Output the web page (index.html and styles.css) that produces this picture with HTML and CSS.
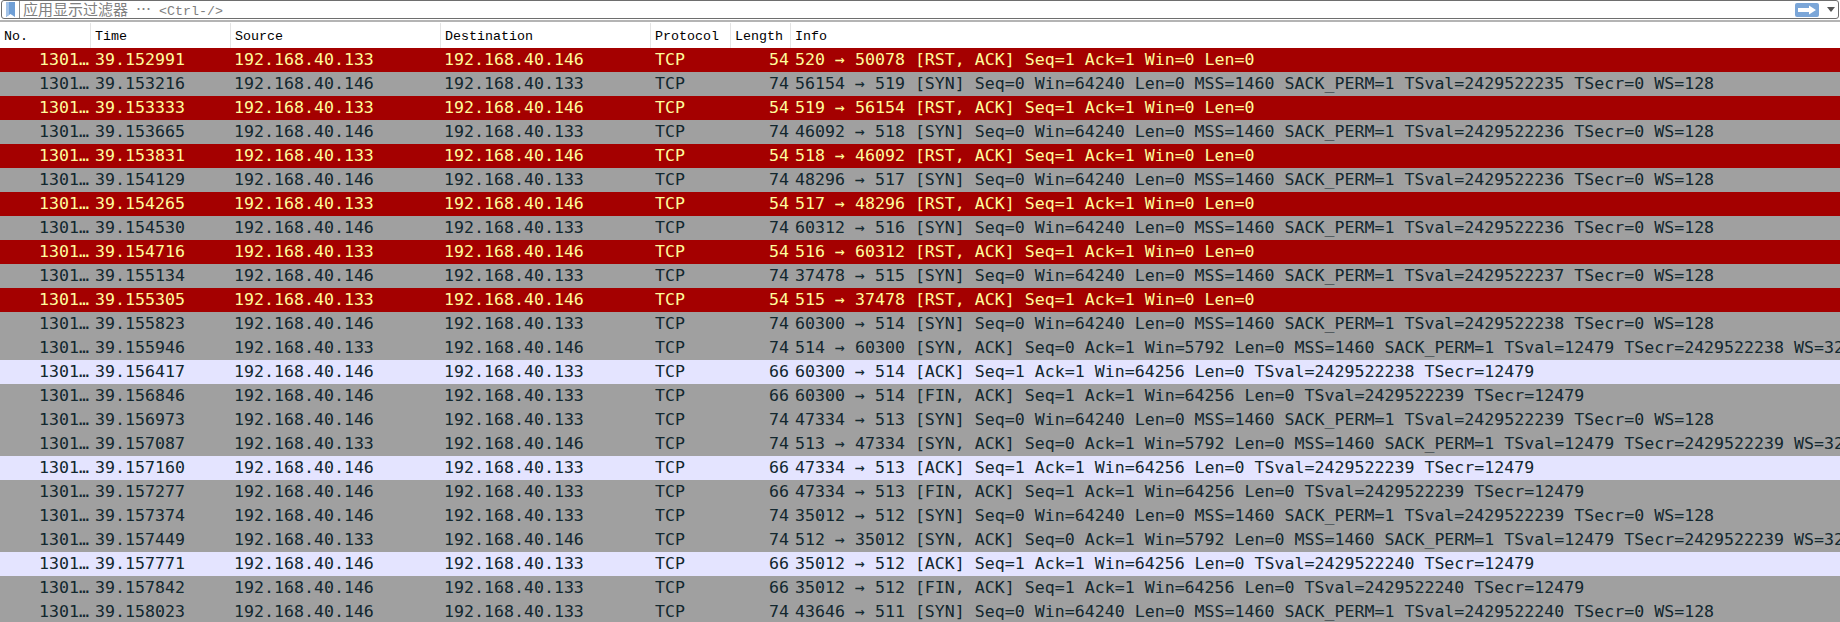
FILE: index.html
```html
<!DOCTYPE html>
<html lang="zh">
<head>
<meta charset="utf-8">
<title>Packets</title>
<link rel="stylesheet" href="styles.css">
</head>
<body>
<div class="filterbar">
  <div class="filterbox">
    <span class="bookmark"><svg width="9" height="15" viewBox="0 0 9 15"><path d="M0 0H9V15L4.500 12 0 15Z" fill="#6f9fd6"/><path d="M0 0H3V13L0 15Z" fill="#a3c2e6"/></svg></span>
    <span class="placeholder"><span class="cjk">应用显示过滤器</span> <span class="cjk">⋯</span> &lt;Ctrl-/&gt;</span>
    <span class="apply"><svg width="24" height="14" viewBox="0 0 24 14"><rect width="24" height="14" rx="2" fill="#7ba6d8"/><path d="M3 5H14V2.500L21 7 14 11.500V9H3Z" fill="#fff"/></svg></span>
    <span class="drop"></span>
  </div>
</div>
<div class="head">
  <div class="c no">No.</div><div class="c time">Time</div><div class="c src">Source</div><div class="c dst">Destination</div><div class="c proto">Protocol</div><div class="c len">Length</div><div class="c info">Info</div>
</div>
<div class="list">
<div class="row rst"><div class="c no">1301…</div><div class="c time">39.152991</div><div class="c src">192.168.40.133</div><div class="c dst">192.168.40.146</div><div class="c proto">TCP</div><div class="c len">54</div><div class="c info">520 → 50078 [RST, ACK] Seq=1 Ack=1 Win=0 Len=0</div></div>
<div class="row flag"><div class="c no">1301…</div><div class="c time">39.153216</div><div class="c src">192.168.40.146</div><div class="c dst">192.168.40.133</div><div class="c proto">TCP</div><div class="c len">74</div><div class="c info">56154 → 519 [SYN] Seq=0 Win=64240 Len=0 MSS=1460 SACK_PERM=1 TSval=2429522235 TSecr=0 WS=128</div></div>
<div class="row rst"><div class="c no">1301…</div><div class="c time">39.153333</div><div class="c src">192.168.40.133</div><div class="c dst">192.168.40.146</div><div class="c proto">TCP</div><div class="c len">54</div><div class="c info">519 → 56154 [RST, ACK] Seq=1 Ack=1 Win=0 Len=0</div></div>
<div class="row flag"><div class="c no">1301…</div><div class="c time">39.153665</div><div class="c src">192.168.40.146</div><div class="c dst">192.168.40.133</div><div class="c proto">TCP</div><div class="c len">74</div><div class="c info">46092 → 518 [SYN] Seq=0 Win=64240 Len=0 MSS=1460 SACK_PERM=1 TSval=2429522236 TSecr=0 WS=128</div></div>
<div class="row rst"><div class="c no">1301…</div><div class="c time">39.153831</div><div class="c src">192.168.40.133</div><div class="c dst">192.168.40.146</div><div class="c proto">TCP</div><div class="c len">54</div><div class="c info">518 → 46092 [RST, ACK] Seq=1 Ack=1 Win=0 Len=0</div></div>
<div class="row flag"><div class="c no">1301…</div><div class="c time">39.154129</div><div class="c src">192.168.40.146</div><div class="c dst">192.168.40.133</div><div class="c proto">TCP</div><div class="c len">74</div><div class="c info">48296 → 517 [SYN] Seq=0 Win=64240 Len=0 MSS=1460 SACK_PERM=1 TSval=2429522236 TSecr=0 WS=128</div></div>
<div class="row rst"><div class="c no">1301…</div><div class="c time">39.154265</div><div class="c src">192.168.40.133</div><div class="c dst">192.168.40.146</div><div class="c proto">TCP</div><div class="c len">54</div><div class="c info">517 → 48296 [RST, ACK] Seq=1 Ack=1 Win=0 Len=0</div></div>
<div class="row flag"><div class="c no">1301…</div><div class="c time">39.154530</div><div class="c src">192.168.40.146</div><div class="c dst">192.168.40.133</div><div class="c proto">TCP</div><div class="c len">74</div><div class="c info">60312 → 516 [SYN] Seq=0 Win=64240 Len=0 MSS=1460 SACK_PERM=1 TSval=2429522236 TSecr=0 WS=128</div></div>
<div class="row rst"><div class="c no">1301…</div><div class="c time">39.154716</div><div class="c src">192.168.40.133</div><div class="c dst">192.168.40.146</div><div class="c proto">TCP</div><div class="c len">54</div><div class="c info">516 → 60312 [RST, ACK] Seq=1 Ack=1 Win=0 Len=0</div></div>
<div class="row flag"><div class="c no">1301…</div><div class="c time">39.155134</div><div class="c src">192.168.40.146</div><div class="c dst">192.168.40.133</div><div class="c proto">TCP</div><div class="c len">74</div><div class="c info">37478 → 515 [SYN] Seq=0 Win=64240 Len=0 MSS=1460 SACK_PERM=1 TSval=2429522237 TSecr=0 WS=128</div></div>
<div class="row rst"><div class="c no">1301…</div><div class="c time">39.155305</div><div class="c src">192.168.40.133</div><div class="c dst">192.168.40.146</div><div class="c proto">TCP</div><div class="c len">54</div><div class="c info">515 → 37478 [RST, ACK] Seq=1 Ack=1 Win=0 Len=0</div></div>
<div class="row flag"><div class="c no">1301…</div><div class="c time">39.155823</div><div class="c src">192.168.40.146</div><div class="c dst">192.168.40.133</div><div class="c proto">TCP</div><div class="c len">74</div><div class="c info">60300 → 514 [SYN] Seq=0 Win=64240 Len=0 MSS=1460 SACK_PERM=1 TSval=2429522238 TSecr=0 WS=128</div></div>
<div class="row flag"><div class="c no">1301…</div><div class="c time">39.155946</div><div class="c src">192.168.40.133</div><div class="c dst">192.168.40.146</div><div class="c proto">TCP</div><div class="c len">74</div><div class="c info">514 → 60300 [SYN, ACK] Seq=0 Ack=1 Win=5792 Len=0 MSS=1460 SACK_PERM=1 TSval=12479 TSecr=2429522238 WS=32</div></div>
<div class="row ack"><div class="c no">1301…</div><div class="c time">39.156417</div><div class="c src">192.168.40.146</div><div class="c dst">192.168.40.133</div><div class="c proto">TCP</div><div class="c len">66</div><div class="c info">60300 → 514 [ACK] Seq=1 Ack=1 Win=64256 Len=0 TSval=2429522238 TSecr=12479</div></div>
<div class="row flag"><div class="c no">1301…</div><div class="c time">39.156846</div><div class="c src">192.168.40.146</div><div class="c dst">192.168.40.133</div><div class="c proto">TCP</div><div class="c len">66</div><div class="c info">60300 → 514 [FIN, ACK] Seq=1 Ack=1 Win=64256 Len=0 TSval=2429522239 TSecr=12479</div></div>
<div class="row flag"><div class="c no">1301…</div><div class="c time">39.156973</div><div class="c src">192.168.40.146</div><div class="c dst">192.168.40.133</div><div class="c proto">TCP</div><div class="c len">74</div><div class="c info">47334 → 513 [SYN] Seq=0 Win=64240 Len=0 MSS=1460 SACK_PERM=1 TSval=2429522239 TSecr=0 WS=128</div></div>
<div class="row flag"><div class="c no">1301…</div><div class="c time">39.157087</div><div class="c src">192.168.40.133</div><div class="c dst">192.168.40.146</div><div class="c proto">TCP</div><div class="c len">74</div><div class="c info">513 → 47334 [SYN, ACK] Seq=0 Ack=1 Win=5792 Len=0 MSS=1460 SACK_PERM=1 TSval=12479 TSecr=2429522239 WS=32</div></div>
<div class="row ack"><div class="c no">1301…</div><div class="c time">39.157160</div><div class="c src">192.168.40.146</div><div class="c dst">192.168.40.133</div><div class="c proto">TCP</div><div class="c len">66</div><div class="c info">47334 → 513 [ACK] Seq=1 Ack=1 Win=64256 Len=0 TSval=2429522239 TSecr=12479</div></div>
<div class="row flag"><div class="c no">1301…</div><div class="c time">39.157277</div><div class="c src">192.168.40.146</div><div class="c dst">192.168.40.133</div><div class="c proto">TCP</div><div class="c len">66</div><div class="c info">47334 → 513 [FIN, ACK] Seq=1 Ack=1 Win=64256 Len=0 TSval=2429522239 TSecr=12479</div></div>
<div class="row flag"><div class="c no">1301…</div><div class="c time">39.157374</div><div class="c src">192.168.40.146</div><div class="c dst">192.168.40.133</div><div class="c proto">TCP</div><div class="c len">74</div><div class="c info">35012 → 512 [SYN] Seq=0 Win=64240 Len=0 MSS=1460 SACK_PERM=1 TSval=2429522239 TSecr=0 WS=128</div></div>
<div class="row flag"><div class="c no">1301…</div><div class="c time">39.157449</div><div class="c src">192.168.40.133</div><div class="c dst">192.168.40.146</div><div class="c proto">TCP</div><div class="c len">74</div><div class="c info">512 → 35012 [SYN, ACK] Seq=0 Ack=1 Win=5792 Len=0 MSS=1460 SACK_PERM=1 TSval=12479 TSecr=2429522239 WS=32</div></div>
<div class="row ack"><div class="c no">1301…</div><div class="c time">39.157771</div><div class="c src">192.168.40.146</div><div class="c dst">192.168.40.133</div><div class="c proto">TCP</div><div class="c len">66</div><div class="c info">35012 → 512 [ACK] Seq=1 Ack=1 Win=64256 Len=0 TSval=2429522240 TSecr=12479</div></div>
<div class="row flag"><div class="c no">1301…</div><div class="c time">39.157842</div><div class="c src">192.168.40.146</div><div class="c dst">192.168.40.133</div><div class="c proto">TCP</div><div class="c len">66</div><div class="c info">35012 → 512 [FIN, ACK] Seq=1 Ack=1 Win=64256 Len=0 TSval=2429522240 TSecr=12479</div></div>
<div class="row flag"><div class="c no">1301…</div><div class="c time">39.158023</div><div class="c src">192.168.40.146</div><div class="c dst">192.168.40.133</div><div class="c proto">TCP</div><div class="c len">74</div><div class="c info">43646 → 511 [SYN] Seq=0 Win=64240 Len=0 MSS=1460 SACK_PERM=1 TSval=2429522240 TSecr=0 WS=128</div></div>
</div>
</body>
</html>
```
FILE: styles.css
```css
html, body { margin: 0; padding: 0; background: #fff; }
body { width: 1840px; height: 622px; overflow: hidden; }
.filterbar { height: 20px; padding: 0 1px; border-bottom: 2px solid #b4b4b4; }
.filterbox { box-sizing: border-box; height: 19px; border: 1px solid #6e6e6e; border-radius: 3px; display: flex; align-items: center; background: #fff; }
.bookmark { width: 17px; height: 17px; border-right: 1px solid #8f8f8f; display: flex; align-items: center; justify-content: center; }
.placeholder { flex: 1; padding-left: 3px; font: 13.33px/17px "Liberation Mono", "Noto Sans CJK SC", monospace; color: #808080; white-space: pre; }
.cjk { font: 15px/17px "Noto Sans CJK SC", sans-serif; }
.apply { display: flex; margin-right: 8px; }
.drop { width: 0; height: 0; border: 4px solid transparent; border-top: 5px solid #555; border-bottom: 0; margin-right: 3px; }
.head { height: 25px; margin-top: 1px; display: flex; font: 13.33px/24px "Liberation Mono", monospace; color: #000; background: #fff; }
.head .c { border-right: 1px solid #e4e4e4; padding: 2px 0 0 4px; box-sizing: border-box; }
.head .info { border-right: 0; }
.row { height: 24px; display: flex; font: 16.6px/23px "DejaVu Sans Mono", monospace; }
.c { box-sizing: border-box; white-space: nowrap; overflow: hidden; flex: none; }
.no { width: 91px; }
.time { width: 140px; }
.src { width: 210px; }
.dst { width: 210px; }
.proto { width: 80px; }
.len { width: 60px; }
.info { flex: 1; min-width: 0; }
.row .c { padding-left: 4px; }
.row .src, .row .dst { padding-left: 3px; }
.row .no, .row .len { text-align: right; padding-right: 2px; padding-left: 0; }
.rst { background: #a40000; color: #fffc9c; }
.flag { background: #a0a0a0; color: #12272e; }
.ack { background: #e4e4ff; color: #12272e; }
```
